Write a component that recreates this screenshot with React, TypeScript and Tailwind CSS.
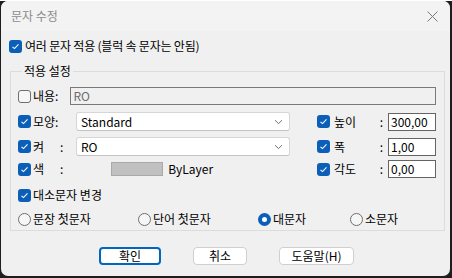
import React from 'react';

const Check: React.FC<{ on?: boolean }> = ({ on = true }) =>
    on ? (
        <span className="w-[13px] h-[13px] rounded-[3px] bg-[#0b5fb8] flex items-center justify-center shrink-0">
            <svg width="9" height="9" viewBox="0 0 9 9">
                <path d="M1.5 4.8 L3.5 6.6 L7.5 2.4" fill="none" stroke="#fff" strokeWidth="1.1" />
            </svg>
        </span>
    ) : (
        <span className="w-[13px] h-[13px] rounded-[3px] border border-[#6e6e6e] bg-[#f6f6f6] shrink-0" />
    );

const Radio: React.FC<{ on?: boolean; label: string; className?: string }> = ({ on, label, className }) => (
    <div className={`flex items-center ${className ?? ''}`}>
        {on ? (
            <span className="w-[13px] h-[13px] rounded-full bg-[#0b5fb8] flex items-center justify-center">
                <span className="w-[5px] h-[5px] rounded-full bg-white" />
            </span>
        ) : (
            <span className="w-[13px] h-[13px] rounded-full border border-[#6e6e6e] bg-[#f6f6f6]" />
        )}
        <span className="ml-[2px]">{label}</span>
    </div>
);

const Chevron = () => (
    <svg width="9" height="6" viewBox="0 0 9 6" className="ml-auto mr-[6px]">
        <path d="M1 1.2 L4.5 4.6 L8 1.2" fill="none" stroke="#606060" strokeWidth="0.9" />
    </svg>
);

const Dropdown: React.FC<{ value: string }> = ({ value }) => (
    <div className="ml-auto w-[214px] h-[19px] bg-white border border-[#d6d6d6] border-b-[#c4c4c4] rounded-[3px] flex items-center pl-[4px]">
        <span>{value}</span>
        <Chevron />
    </div>
);

const NumField: React.FC<{ label: string; value: string }> = ({ label, value }) => (
    <div className="flex items-center w-[119px]">
        <Check />
        <span className="ml-[4px]">{label}</span>
        <span className="ml-auto mr-[5px]">:</span>
        <div className="w-[48px] h-[18px] bg-white border border-[#646464] flex items-center pl-[2px] leading-none">{value}</div>
    </div>
);

const App: React.FC = () => {
    return (
        <div
            className="w-[452px] h-[278px] bg-[#1e1e1e] text-[12px] text-black"
            style={{ fontFamily: '"Noto Sans CJK KR", "Noto Sans", sans-serif' }}
        >
            <div className="ml-px mt-px w-[449px] h-[275px] rounded-[7px] overflow-hidden bg-[#f0f0f0] flex flex-col">
                {/* title bar */}
                <div className="h-[30px] bg-[#f3f3f3] flex items-center pl-[10px] shrink-0">
                    <span className="text-[#8c8c8c]">문자 수정</span>
                    <svg width="11" height="11" viewBox="0 0 11 11" className="ml-auto mr-[12px]">
                        <path d="M0.5 0.5 L10.5 10.5 M10.5 0.5 L0.5 10.5" stroke="#7a7a7a" strokeWidth="1" />
                    </svg>
                </div>

                <div className="flex items-center h-[14px] mt-[8px] pl-[8px]">
                    <Check />
                    <span className="ml-[3px] tracking-[-0.2px]">여러 문자 적용 (블럭 속 문자는 안됨)</span>
                </div>

                <fieldset className="mt-[11px] ml-[9px] w-[435px] h-[167px] border border-[#dcdcdc] pl-[7px] pr-[8px]">
                    <legend className="ml-[4px] px-[2px] leading-[14px]">적용 설정</legend>

                    <div className="flex items-center h-[18px] mt-[9px]">
                        <Check on={false} />
                        <span className="ml-[2px]">내용:</span>
                        <div className="ml-[12px] flex-1 h-[18px] border border-[#7a7a7a] bg-[#f0f0f0] text-[#6d6d6d] flex items-center pl-[2px]">RO</div>
                    </div>

                    <div className="flex items-center h-[19px] mt-[7px]">
                        <div className="flex items-center w-[272px]">
                            <Check />
                            <span className="ml-[2px]">모양:</span>
                            <Dropdown value="Standard" />
                        </div>
                        <div className="ml-auto">
                            <NumField label="높이" value="300,00" />
                        </div>
                    </div>

                    <div className="flex items-center h-[19px] mt-[6px]">
                        <div className="flex items-center w-[272px]">
                            <Check />
                            <span className="ml-[2px] w-[27px]">켜</span>
                            <span>:</span>
                            <Dropdown value="RO" />
                        </div>
                        <div className="ml-auto">
                            <NumField label="폭" value="1,00" />
                        </div>
                    </div>

                    <div className="flex items-center h-[18px] mt-[4px]">
                        <div className="flex items-center w-[272px]">
                            <Check />
                            <span className="ml-[2px] w-[27px]">색</span>
                            <span>:</span>
                            <span className="ml-[48px] w-[52px] h-[14px] bg-[#c0c0c0] border border-[#a9a9a9]" />
                            <span className="ml-[5px]">ByLayer</span>
                        </div>
                        <div className="ml-auto">
                            <NumField label="각도" value="0,00" />
                        </div>
                    </div>

                    <div className="flex items-center h-[14px] mt-[10px]">
                        <Check />
                        <span className="ml-[2px]">대소문자 변경</span>
                    </div>

                    <div className="flex items-center h-[14px] mt-[10px]">
                        <Radio label="문장 첫문자" className="w-[120px]" />
                        <Radio label="단어 첫문자" className="w-[120px]" />
                        <Radio on label="대문자" className="w-[92px]" />
                        <Radio label="소문자" />
                    </div>
                </fieldset>

                <div className="flex items-center mt-[16px] pl-[98px]">
                    <button className="w-[62px] h-[18px] rounded-[4px] border-2 border-[#0067c0] bg-white flex items-center justify-center leading-none">확인</button>
                    <button className="ml-[32px] w-[54px] h-[18px] rounded-[4px] border border-[#cfcfcf] bg-white flex items-center justify-center leading-none">취소</button>
                    <button className="ml-[32px] w-[75px] h-[18px] rounded-[4px] border border-[#cfcfcf] bg-white flex items-center justify-center leading-none">도움말(H)</button>
                </div>
            </div>
        </div>
    );
};

export default App;
